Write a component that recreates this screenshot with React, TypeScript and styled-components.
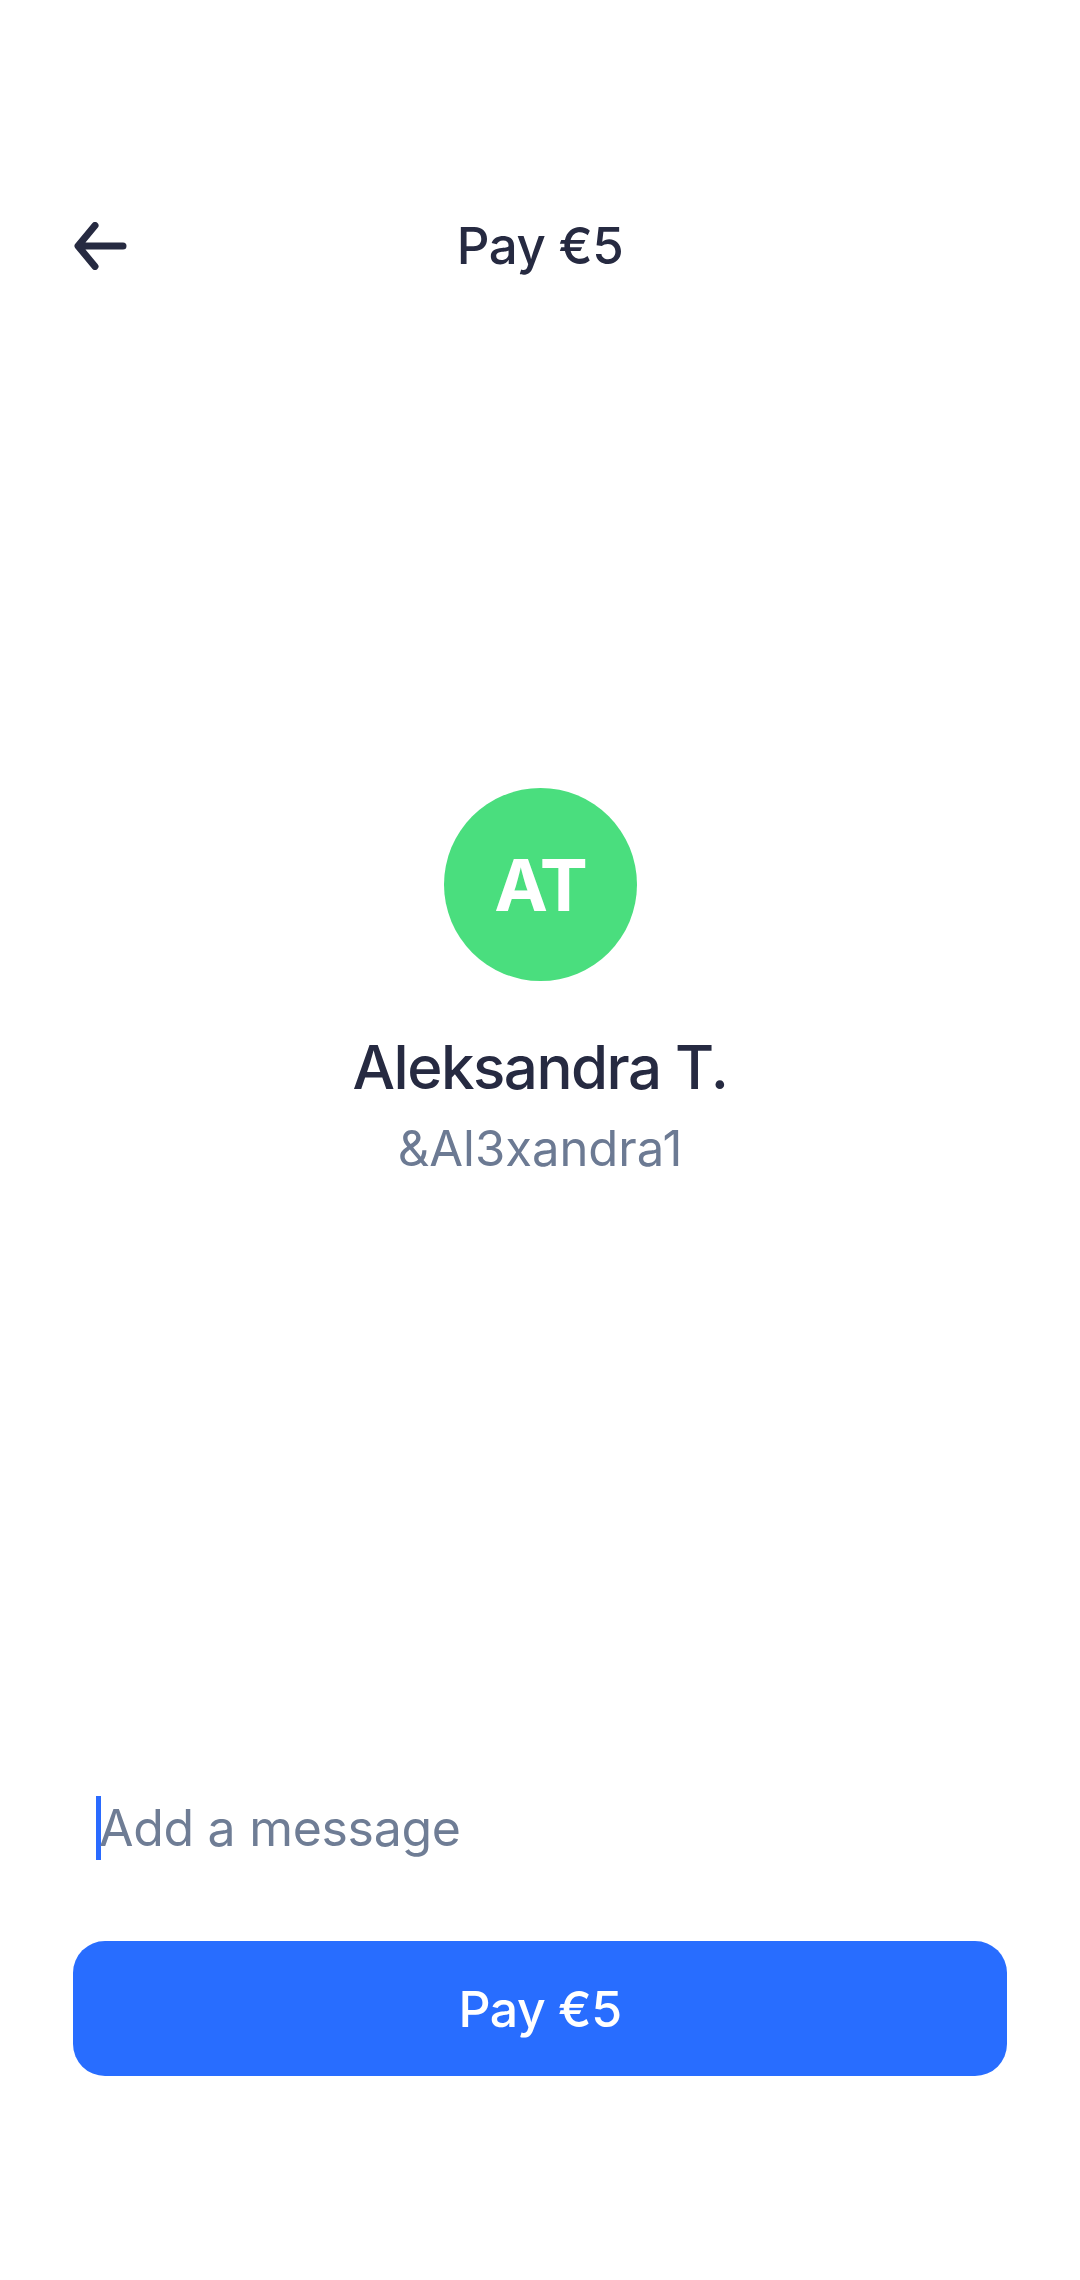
import React from "react";
import styled, { createGlobalStyle } from "styled-components";

const Global = createGlobalStyle`
  html, body { margin: 0; padding: 0; background: #ffffff; }
  * { box-sizing: border-box; }
  body { font-family: "Inter", "Noto Sans", sans-serif; }
`;

const Screen = styled.div`
  width: 1080px;
  height: 2280px;
  background: #ffffff;
  display: flex;
  flex-direction: column;
  color: #262a41;
`;

const Header = styled.header`
  margin-top: 216px;
  height: 60px;
  padding: 0 73px;
  display: grid;
  grid-template-columns: 1fr auto 1fr;
  align-items: center;
`;

const BackButton = styled.button`
  justify-self: start;
  width: 56px;
  height: 60px;
  padding: 0;
  border: none;
  background: transparent;
  display: flex;
  align-items: center;
  justify-content: flex-start;
  color: #262a41;
`;

const Title = styled.h1`
  margin: 0;
  font-size: 51px;
  line-height: 60px;
  font-weight: 500;
  letter-spacing: -0.5px;
`;

const Profile = styled.section`
  margin-top: 512px;
  display: flex;
  flex-direction: column;
  align-items: center;
`;

const Avatar = styled.div<{ $bg: string }>`
  width: 193px;
  height: 193px;
  border-radius: 50%;
  background: ${(p) => p.$bg};
  color: #ffffff;
  display: flex;
  align-items: center;
  justify-content: center;
  font-size: 72px;
  font-weight: 700;
  letter-spacing: -2px;
`;

const Name = styled.h2`
  margin: 50px 0 0;
  font-size: 60px;
  line-height: 72px;
  font-weight: 500;
  letter-spacing: -1.5px;
`;

const Handle = styled.div`
  margin-top: 16px;
  font-size: 49px;
  line-height: 60px;
  font-weight: 400;
  color: #6c7a93;
`;

const Spacer = styled.div`
  flex: 1;
`;

const MessageField = styled.div`
  margin: 0 0 0 96px;
  height: 64px;
  display: flex;
  align-items: flex-start;
`;

const Caret = styled.span`
  width: 5px;
  height: 64px;
  background: #2a6bff;
  margin-right: -2px;
  flex: none;
`;

const Placeholder = styled.span`
  font-size: 50px;
  line-height: 64px;
  color: #6f7d95;
  letter-spacing: -0.3px;
`;

const PayButton = styled.button`
  margin: 81px 73px 0;
  height: 135px;
  border: none;
  border-radius: 32px;
  background: #286dff;
  color: #ffffff;
  font-family: "Inter", "Noto Sans", sans-serif;
  font-size: 50px;
  font-weight: 500;
  letter-spacing: -0.5px;
`;

const Bottom = styled.div`
  height: 204px;
`;

export default function App() {
  return (
    <Screen>
      <Global />
      <Header>
        <BackButton aria-label="Back">
          <svg width="54" height="48" viewBox="0 0 54 48" fill="none">
            <path
              d="M50 24H6M22 3.5L5 24l17 20.5"
              stroke="currentColor"
              strokeWidth="7"
              strokeLinecap="round"
              strokeLinejoin="round"
            />
          </svg>
        </BackButton>
        <Title>Pay €5</Title>
        <div />
      </Header>
      <Profile>
        <Avatar $bg="#4ade7e">AT</Avatar>
        <Name>Aleksandra T.</Name>
        <Handle>&amp;Al3xandra1</Handle>
      </Profile>
      <Spacer />
      <MessageField>
        <Caret />
        <Placeholder>Add a message</Placeholder>
      </MessageField>
      <PayButton>Pay €5</PayButton>
      <Bottom />
    </Screen>
  );
}
